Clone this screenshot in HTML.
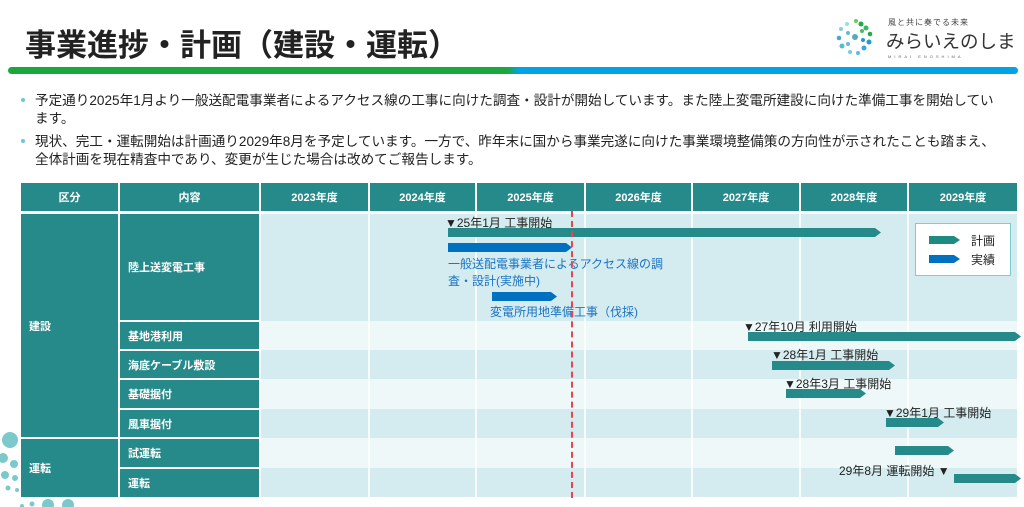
<!DOCTYPE html>
<html><head><meta charset="utf-8"><style>
*{margin:0;padding:0;box-sizing:border-box}
body{width:1024px;height:507px;overflow:hidden;background:#fff;position:relative;font-family:"Liberation Sans","Noto Sans CJK JP",sans-serif;color:#222}
.a{position:absolute;white-space:nowrap}
.h{background:#268a8b;color:#fff;font-weight:bold;font-size:11px;display:flex;align-items:center;justify-content:center}
.l{background:#268a8b;color:#fff;font-weight:bold;font-size:11px;display:flex;align-items:center;padding-left:8px}
.d{background:#d4ecef}.w{background:#eef8f9}
.bar{position:absolute;height:9px;background:#268a8b;clip-path:polygon(0 0,calc(100% - 6px) 0,100% 50%,calc(100% - 6px) 100%,0 100%)}
.b{background:#0070c0}
.t{position:absolute;font-size:11.5px;white-space:nowrap;color:#222}
.bt{color:#1a73c4}
</style></head><body>
<div class="a" style="left:25px;top:20px;font-size:31px;font-weight:bold;letter-spacing:0px">事業進捗・計画（建設・運転）</div>
<!-- logo -->
<svg class="a" style="left:834px;top:16px" width="42" height="42" viewBox="0 0 42 42">
<g>
<circle cx="21" cy="21" r="3" fill="#5ab"/>
<circle cx="27" cy="8" r="2.5" fill="#2a4"/><circle cx="32" cy="12" r="2.5" fill="#3b5"/><circle cx="22" cy="5" r="2" fill="#6c6"/><circle cx="36" cy="18" r="2.3" fill="#2a4"/><circle cx="28" cy="15" r="2" fill="#4b6"/>
<circle cx="35" cy="26" r="2.5" fill="#29c"/><circle cx="30" cy="32" r="2.5" fill="#3ad"/><circle cx="24" cy="37" r="2" fill="#5be"/><circle cx="29" cy="24" r="2" fill="#29c"/><circle cx="16" cy="36" r="2" fill="#7cd"/>
<circle cx="8" cy="30" r="2.5" fill="#5bc"/><circle cx="5" cy="22" r="2.3" fill="#4ac"/><circle cx="14" cy="28" r="2" fill="#6bd"/><circle cx="7" cy="13" r="2" fill="#8cd"/><circle cx="13" cy="8" r="2" fill="#9dd"/><circle cx="14" cy="17" r="2" fill="#6bc"/>
</g></svg>
<div class="a" style="left:888px;top:17px;font-size:8px;color:#444;letter-spacing:1px">風と共に奏でる未来</div>
<div class="a" style="left:886px;top:28px;font-size:18.5px;color:#333;letter-spacing:0px">みらいえのしま</div>
<div class="a" style="left:888px;top:54px;font-size:4px;color:#666;letter-spacing:3px">MIRAI ENOSHIMA</div>
<!-- line -->
<div class="a" style="left:8px;top:67px;width:1010px;height:7px;border-radius:4px;background:linear-gradient(90deg,#1aa83c 0,#1aa83c 49.5%,#00a3e4 50.5%,#00a3e4 100%)"></div>
<!-- bullets -->
<div class="a" style="left:21px;top:98px;width:4px;height:4px;border-radius:50%;background:#6bc8d8"></div>
<div class="a" style="left:35px;top:92px;font-size:13.6px;line-height:18px;white-space:normal;width:962px">予定通り2025年1月より一般送配電事業者によるアクセス線の工事に向けた調査・設計が開始しています。また陸上変電所建設に向けた準備工事を開始しています。</div>
<div class="a" style="left:21px;top:139px;width:4px;height:4px;border-radius:50%;background:#6bc8d8"></div>
<div class="a" style="left:35px;top:133px;font-size:13.6px;line-height:18px;white-space:normal;width:962px">現状、完工・運転開始は計画通り2029年8月を予定しています。一方で、昨年末に国から事業完遂に向けた事業環境整備策の方向性が示されたことも踏まえ、全体計画を現在精査中であり、変更が生じた場合は改めてご報告します。</div>
<!-- decorative dots -->
<svg class="a" style="left:0;top:420px" width="80" height="87"><g fill="#7cc9cc"><circle cx="10" cy="20" r="8"/><circle cx="3" cy="38" r="5"/><circle cx="14" cy="44" r="4"/><circle cx="5" cy="55" r="4"/><circle cx="15" cy="58" r="3"/><circle cx="8" cy="68" r="2.5"/><circle cx="17" cy="70" r="2"/><circle cx="48" cy="85" r="6"/><circle cx="68" cy="85" r="6"/><circle cx="32" cy="84" r="2.5"/><circle cx="22" cy="86" r="2"/></g></svg>
<!-- table header -->
<div class="a h" style="left:21px;top:183px;width:97px;height:28px">区分</div>
<div class="a h" style="left:120px;top:183px;width:139px;height:28px">内容</div>
<div class="a h" style="left:261px;top:183px;width:107px;height:28px">2023年度</div>
<div class="a h" style="left:370px;top:183px;width:105px;height:28px">2024年度</div>
<div class="a h" style="left:477px;top:183px;width:107px;height:28px">2025年度</div>
<div class="a h" style="left:586px;top:183px;width:105px;height:28px">2026年度</div>
<div class="a h" style="left:693px;top:183px;width:106px;height:28px">2027年度</div>
<div class="a h" style="left:801px;top:183px;width:106px;height:28px">2028年度</div>
<div class="a h" style="left:909px;top:183px;width:108px;height:28px">2029年度</div>
<!-- body left -->
<div class="a l" style="left:21px;top:214px;width:97px;height:223px">建設</div>
<div class="a l" style="left:21px;top:439px;width:97px;height:58px">運転</div>
<div class="a l" style="left:120px;top:214px;width:139px;height:106px">陸上送変電工事</div>
<div class="a l" style="left:120px;top:322px;width:139px;height:27px">基地港利用</div>
<div class="a l" style="left:120px;top:351px;width:139px;height:27px">海底ケーブル敷設</div>
<div class="a l" style="left:120px;top:380px;width:139px;height:28px">基礎据付</div>
<div class="a l" style="left:120px;top:410px;width:139px;height:27px">風車据付</div>
<div class="a l" style="left:120px;top:439px;width:139px;height:28px">試運転</div>
<div class="a l" style="left:120px;top:469px;width:139px;height:28px">運転</div>
<!-- row backgrounds -->
<div class="a d" style="left:261px;top:214px;width:756px;height:107px"></div>
<div class="a w" style="left:261px;top:321px;width:756px;height:29px"></div>
<div class="a d" style="left:261px;top:350px;width:756px;height:29px"></div>
<div class="a w" style="left:261px;top:379px;width:756px;height:30px"></div>
<div class="a d" style="left:261px;top:409px;width:756px;height:29px"></div>
<div class="a w" style="left:261px;top:438px;width:756px;height:30px"></div>
<div class="a d" style="left:261px;top:468px;width:756px;height:29px"></div>
<!-- column lines -->
<div class="a" style="left:368px;top:214px;width:2px;height:283px;background:#fff;opacity:.8"></div>
<div class="a" style="left:475px;top:214px;width:2px;height:283px;background:#fff;opacity:.8"></div>
<div class="a" style="left:584px;top:214px;width:2px;height:283px;background:#fff;opacity:.8"></div>
<div class="a" style="left:691px;top:214px;width:2px;height:283px;background:#fff;opacity:.8"></div>
<div class="a" style="left:799px;top:214px;width:2px;height:283px;background:#fff;opacity:.8"></div>
<div class="a" style="left:907px;top:214px;width:2px;height:283px;background:#fff;opacity:.8"></div>
<!-- legend -->
<div class="a" style="left:915px;top:223px;width:96px;height:53px;background:#fff;border:1.5px solid #7ad0cf"></div>
<div class="bar" style="left:929px;top:236px;width:31px;height:8px;background:#1e8a80"></div>
<div class="bar b" style="left:929px;top:255px;width:31px;height:8px"></div>
<div class="t" style="left:971px;top:232px;font-size:12px">計画</div>
<div class="t" style="left:971px;top:251px;font-size:12px">実績</div>
<!-- bars -->
<div class="t" style="left:445px;top:214px;font-size:12px">▼25年1月 工事開始</div>
<div class="bar" style="left:448px;top:228px;width:433px"></div>
<div class="bar b" style="left:448px;top:243px;width:124px"></div>
<div class="t bt" style="left:448px;top:256px;line-height:17px;font-size:12px">一般送配電事業者によるアクセス線の調<br>査・設計(実施中)</div>
<div class="bar b" style="left:492px;top:292px;width:65px"></div>
<div class="t bt" style="left:490px;top:303px;font-size:12px">変電所用地準備工事（伐採)</div>
<div class="t" style="left:743px;top:318px;font-size:12px">▼27年10月 利用開始</div>
<div class="bar" style="left:748px;top:332px;width:273px"></div>
<div class="t" style="left:771px;top:346px;font-size:12px">▼28年1月 工事開始</div>
<div class="bar" style="left:772px;top:361px;width:123px"></div>
<div class="t" style="left:784px;top:375px;font-size:12px">▼28年3月 工事開始</div>
<div class="bar" style="left:786px;top:389px;width:80px"></div>
<div class="t" style="left:884px;top:404px;font-size:12px">▼29年1月 工事開始</div>
<div class="bar" style="left:886px;top:418px;width:58px"></div>
<div class="bar" style="left:895px;top:446px;width:59px"></div>
<div class="t" style="left:839px;top:462px;font-size:12px">29年8月 運転開始 ▼</div>
<div class="bar" style="left:954px;top:474px;width:67px"></div>
<!-- dashed line -->
<div class="a" style="left:571px;top:211px;width:0;height:287px;border-left:2px dashed #e8454f"></div>
</body></html>
